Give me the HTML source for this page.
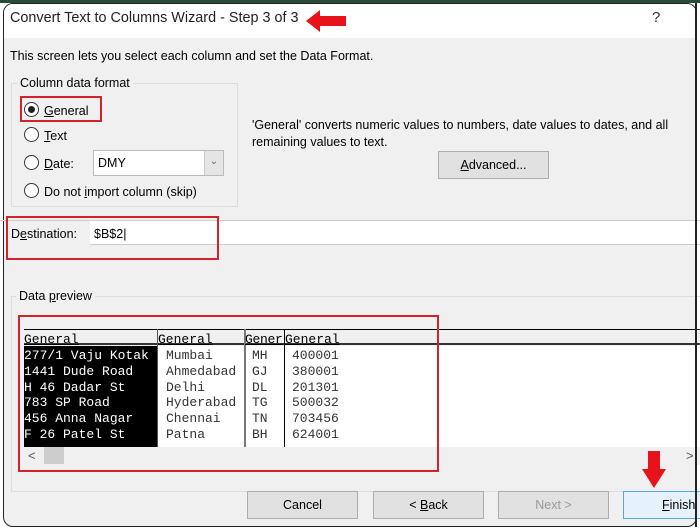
<!DOCTYPE html>
<html><head><meta charset="utf-8"><style>
*{margin:0;padding:0;box-sizing:border-box}
body{width:700px;height:530px;background:#fff;position:relative;overflow:hidden;font-family:"Liberation Sans",sans-serif;font-size:12px;color:#000}
.a{position:absolute}
.u{text-decoration:underline}
.mono{font-family:"Liberation Mono",monospace;font-size:13px;line-height:15.8px;white-space:pre}
.btn{position:absolute;height:28px;background:#e1e1e1;border:1px solid #adadad;text-align:center;line-height:26px;font-size:12.5px}
.radio{position:absolute;width:15px;height:15px;border:1px solid #333;border-radius:50%;background:#fff}
</style></head><body>
<div class="a" style="left:0;top:0;width:700px;height:3px;background:#2a4a3a"></div>
<div class="a" style="left:3px;top:3px;width:694px;height:524px;border:1.5px solid #222;border-radius:10px;background:#f0f0f0;overflow:hidden">
  <div class="a" style="left:0;top:0;width:700px;height:34px;background:#fff"></div>
</div>
<div class="a" style="left:10px;top:10px;font-size:14.4px;color:#222">Convert Text to Columns Wizard - Step 3 of 3</div>
<svg class="a" style="left:306px;top:10px" width="42" height="22"><polygon points="0,11 14,0 14,6 40,6 40,16 14,16 14,22" fill="#e8121a"/></svg>
<div class="a" style="left:652px;top:9px;font-size:15px;color:#333">?</div>
<div class="a" style="left:10px;top:49px;font-size:12.5px">This screen lets you select each column and set the Data Format.</div>
<div class="a" style="left:11px;top:83px;width:227px;height:124px;border:1px solid #dcdcdc"></div>
<div class="a" style="left:17px;top:76px;background:#f0f0f0;padding:0 3px;font-size:12.5px">Column data format</div>
<div class="a" style="left:20px;top:96px;width:82px;height:26px;border:2px solid #d2232a"></div>
<div class="radio" style="left:24px;top:102px"><div class="a" style="left:3px;top:3px;width:7px;height:7px;border-radius:50%;background:#222"></div></div>
<div class="a" style="left:44px;top:104px;font-size:12.5px"><span class="u">G</span>eneral</div>
<div class="radio" style="left:24px;top:127px"></div>
<div class="a" style="left:44px;top:129px;font-size:12.5px"><span class="u">T</span>ext</div>
<div class="radio" style="left:24px;top:155px"></div>
<div class="a" style="left:44px;top:157px;font-size:12.5px"><span class="u">D</span>ate:</div>
<div class="a" style="left:93px;top:150px;width:131px;height:26px;border:1px solid #bbb;background:#fff"></div>
<div class="a" style="left:98px;top:156px;font-size:12.5px">DMY</div>
<div class="a" style="left:204px;top:151px;width:19px;height:24px;background:#e5e5e5;border-left:1px solid #ccc;text-align:center;color:#666;font-size:10px;line-height:22px">&#8964;</div>
<div class="radio" style="left:24px;top:183px"></div>
<div class="a" style="left:44px;top:185px;font-size:12.5px">Do not <span class="u">i</span>mport column (skip)</div>
<div class="a" style="left:252px;top:117px;font-size:12.5px;line-height:17px">'General' converts numeric values to numbers, date values to dates, and all<br>remaining values to text.</div>
<div class="btn" style="left:438px;top:151px;width:111px;height:28px"><span class="u">A</span>dvanced...</div>
<div class="a" style="left:0;top:220px;width:700px;height:1px;background:#ccc"></div>
<div class="a" style="left:90px;top:221px;width:610px;height:24px;background:#fff;border-bottom:1px solid #ccc"></div>
<div class="a" style="left:11px;top:227px;font-size:12.5px">D<span class="u">e</span>stination:</div>
<div class="a" style="left:94px;top:227px;font-size:12.5px">$B$2|</div>
<div class="a" style="left:6px;top:216px;width:213px;height:44px;border:2px solid #d2232a"></div>
<div class="a" style="left:11px;top:296px;width:690px;height:196px;border:1px solid #dcdcdc"></div>
<div class="a" style="left:16px;top:289px;background:#f0f0f0;padding:0 3px;font-size:12.5px">Data <span class="u">p</span>review</div>
<div class="a" style="left:24px;top:329px;width:676px;height:16px;background:#f0f0f0;border-top:1px solid #000;border-bottom:2px solid #333"></div>
<div class="a" style="left:24px;top:346px;width:676px;height:101px;background:#fff"></div>
<div class="a" style="left:24px;top:346px;width:133px;height:101px;background:#000"></div>
<div class="a" style="left:157px;top:329px;width:1px;height:118px;background:#555"></div>
<div class="a" style="left:244px;top:329px;width:2px;height:118px;background:#777"></div>
<div class="a" style="left:284px;top:329px;width:1px;height:118px;background:#000"></div>
<div class="a mono" style="left:24px;top:332px;text-decoration:underline">General</div>
<div class="a mono" style="left:158px;top:332px;text-decoration:underline">General</div>
<div class="a mono" style="left:245px;top:332px;text-decoration:underline;letter-spacing:-0.3px">Gener</div>
<div class="a mono" style="left:285px;top:332px;text-decoration:underline">General</div>
<div class="a mono" style="left:24px;top:348px;color:#fff">277/1 Vaju Kotak
1441 Dude Road
H 46 Dadar St
783 SP Road
456 Anna Nagar
F 26 Patel St</div>
<div class="a mono" style="left:166px;top:348px;color:#333">Mumbai
Ahmedabad
Delhi
Hyderabad
Chennai
Patna</div>
<div class="a mono" style="left:252px;top:348px;color:#333">MH
GJ
DL
TG
TN
BH</div>
<div class="a mono" style="left:292px;top:348px;color:#333">400001
380001
201301
500032
703456
624001</div>
<div class="a" style="left:24px;top:447px;width:676px;height:18px;background:#f0f0f0"></div>
<div class="a" style="left:28px;top:448px;color:#555;font-size:13px">&lt;</div>
<div class="a" style="left:44px;top:447px;width:20px;height:17px;background:#cdcdcd"></div>
<div class="a" style="left:686px;top:448px;color:#555;font-size:13px">&gt;</div>
<div class="a" style="left:18px;top:315px;width:421px;height:157px;border:2px solid #d2232a"></div>
<div class="btn" style="left:247px;top:491px;width:111px">Cancel</div>
<div class="btn" style="left:373px;top:491px;width:111px">&lt; <span class="u">B</span>ack</div>
<div class="btn" style="left:498px;top:491px;width:111px;color:#999">Next &gt;</div>
<div class="btn" style="left:623px;top:491px;width:90px;background:#e5f1fb;border-color:#5aa7dc;text-align:left;padding-left:38px"><span class="u">F</span>inish</div>
<svg class="a" style="left:641px;top:451px" width="26" height="38"><polygon points="7,0 19,0 19,18 25,18 13,37 1,18 7,18" fill="#e8121a"/></svg>
<div class="a" style="left:695px;top:3px;width:2px;height:524px;background:#222"></div>
</body></html>
